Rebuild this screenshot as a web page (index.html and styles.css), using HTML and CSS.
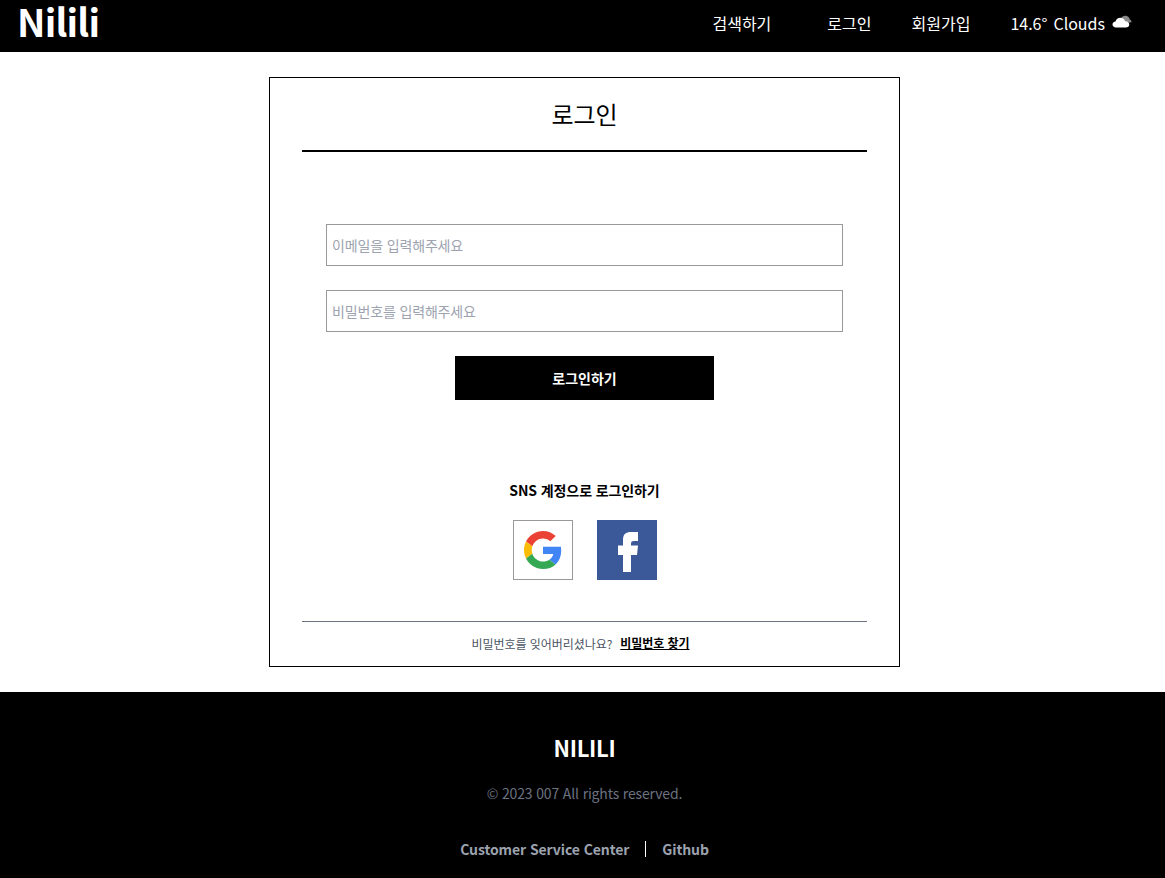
FILE: index.html
```html
<!DOCTYPE html>
<html lang="ko">
<head>
    <meta charset="UTF-8">
    <meta name="viewport" content="width=device-width, initial-scale=1.0">
    <title>Nilili 로그인</title>
    <link rel="stylesheet" href="styles.css">
</head>
<body>
    <header class="header">
        <a class="logo" href="#">Nilili</a>
        <nav class="nav">
            <a class="nav-search" href="#">검색하기</a>
            <a class="nav-login" href="#">로그인</a>
            <a class="nav-join" href="#">회원가입</a>
            <div class="weather">
                <span>14.6°</span>
                <span>Clouds</span>
                <svg class="weather-icon" width="20" height="14" viewBox="0 0 20 14">
                    <path fill="#8a8a8a" d="M9 3.5C10 1.2 12 .4 14 .8c2 .4 3.400 1.800 3.800 3.600 1.200.5 1.900 1.600 1.700 2.900L14 8z"/>
                    <path fill="#fff" d="M4 12.500C2 12.500.5 11.300.5 9.600c0-1.600 1.300-2.900 3-3C4 4.300 6 2.800 8.300 2.800c2.300 0 4.200 1.400 4.800 3.500 2.300-.2 4.200 1.300 4.200 3.200s-1.500 3-3.500 3z"/>
                </svg>
            </div>
        </nav>
    </header>

    <main class="main">
        <section class="card">
            <h1 class="card-title">로그인</h1>
            <form class="login-form">
                <input class="text-input" type="email" placeholder="이메일을 입력해주세요">
                <input class="text-input" type="password" placeholder="비밀번호를 입력해주세요">
                <button class="submit-btn" type="button">로그인하기</button>
            </form>
            <div class="sns">
                <p class="sns-title">SNS 계정으로 로그인하기</p>
                <div class="sns-list">
                    <a class="sns-btn sns-google" href="#">
                        <svg width="38" height="38" viewBox="0 0 48 48">
                            <path fill="#EA4335" d="M24 9.500c3.540 0 6.710 1.220 9.210 3.600l6.850-6.850C35.900 2.380 30.470 0 24 0 14.620 0 6.510 5.380 2.560 13.220l7.980 6.190C12.430 13.720 17.740 9.500 24 9.500z"/>
                            <path fill="#4285F4" d="M46.980 24.550c0-1.570-.15-3.090-.38-4.550H24v9.020h12.940c-.58 2.960-2.260 5.480-4.780 7.180l7.730 6c4.510-4.180 7.090-10.360 7.090-17.650z"/>
                            <path fill="#FBBC05" d="M10.530 28.590c-.48-1.450-.76-2.990-.76-4.590s.27-3.140.76-4.590l-7.980-6.190C.92 16.460 0 20.120 0 24c0 3.880.92 7.540 2.560 10.780l7.970-6.190z"/>
                            <path fill="#34A853" d="M24 48c6.480 0 11.930-2.130 15.890-5.810l-7.730-6c-2.150 1.450-4.920 2.300-8.160 2.300-6.260 0-11.570-4.220-13.470-9.910l-7.980 6.190C6.510 42.620 14.620 48 24 48z"/>
                        </svg>
                    </a>
                    <a class="sns-btn sns-facebook" href="#">
                        <svg width="60" height="60" viewBox="0 0 60 60">
                            <path fill="#fff" d="M26 52V35h-5v-9.500h5V20c0-6 3-8 8-8h7v9h-4c-2.500 0-3 1-3 3v1.500h7L40 35h-6v17z"/>
                        </svg>
                    </a>
                </div>
            </div>
            <div class="find-row">
                <span class="find-text">비밀번호를 잊어버리셨나요?</span>
                <a class="find-link" href="#">비밀번호 찾기</a>
            </div>
        </section>
    </main>

    <footer class="footer">
        <div class="footer-brand">NILILI</div>
        <p class="footer-copy">© 2023 007 All rights reserved.</p>
        <div class="footer-links">
            <a href="#">Customer Service Center</a>
            <a href="#">Github</a>
        </div>
    </footer>
</body>
</html>
```

FILE: styles.css
```css
* {
    box-sizing: border-box;
}

body {
    margin: 0;
    font-family: "Noto Sans CJK KR", "Noto Sans", sans-serif;
    background-color: white;
    color: black;
}

a {
    color: inherit;
    text-decoration: none;
}

.header {
    height: 52px;
    background-color: black;
    color: white;
    display: flex;
    justify-content: space-between;
    align-items: flex-start;
    padding: 0 33px 0 17px;
}

.logo {
    font-size: 38px;
    font-weight: 700;
    line-height: 42px;
    letter-spacing: -0.8px;
}

.nav {
    display: flex;
    align-items: center;
    font-size: 16px;
    line-height: 24px;
    margin-top: 11px;
}

.nav-search {
    margin-right: 56px;
}

.nav-login {
    margin-right: 40px;
}

.nav-join {
    margin-right: 40px;
}

.weather {
    display: flex;
    align-items: center;
    gap: 6px;
}

.weather-icon {
    margin-left: 1px;
    margin-top: -2px;
}

.main {
    padding: 25px 0 25px 4px;
    display: flex;
    justify-content: center;
}

.card {
    width: 631px;
    height: 590px;
    border: 1px solid black;
    padding: 0 32px;
}

.card-title {
    margin: 0;
    height: 74px;
    border-bottom: 2px solid black;
    text-align: center;
    font-size: 24px;
    font-weight: 400;
    line-height: 72px;
}

.login-form {
    display: flex;
    flex-direction: column;
    align-items: center;
    gap: 24px;
    padding-top: 72px;
}

.text-input {
    width: 517px;
    height: 42px;
    border: 1px solid #999;
    padding: 0 5px;
    font-family: inherit;
    font-size: 14px;
    letter-spacing: -0.15px;
    outline: none;
}

.text-input::placeholder {
    color: #9ca3af;
}

.submit-btn {
    width: 259px;
    height: 44px;
    border: none;
    background-color: black;
    color: white;
    font-family: inherit;
    font-size: 14px;
    font-weight: 700;
}

.sns {
    margin-top: 78px;
    text-align: center;
}

.sns-title {
    margin: 0;
    font-size: 14px;
    font-weight: 700;
    line-height: 24px;
    letter-spacing: -0.1px;
}

.sns-list {
    display: flex;
    justify-content: center;
    gap: 24px;
    margin-top: 18px;
}

.sns-btn {
    width: 60px;
    height: 60px;
    display: flex;
    align-items: center;
    justify-content: center;
}

.sns-google {
    border: 1px solid #999;
}

.sns-facebook {
    background-color: #3b5998;
}

.find-row {
    margin-top: 41px;
    height: 44px;
    border-top: 1px solid #6b7280;
    display: flex;
    justify-content: center;
    align-items: center;
    gap: 8px;
    padding-right: 8px;
    font-size: 12px;
    letter-spacing: -0.05px;
}

.find-text {
    color: #4b5563;
}

.find-link {
    font-weight: 700;
    text-decoration: underline;
    margin-top: -3px;
}

.footer {
    height: 186px;
    background-color: black;
    color: white;
    text-align: center;
    padding: 37px 0 0 4px;
}

.footer-brand {
    font-size: 22px;
    font-weight: 700;
    line-height: 36px;
    letter-spacing: -0.3px;
}

.footer-copy {
    margin: 18px 0 0;
    font-size: 14px;
    line-height: 20px;
    letter-spacing: -0.15px;
    color: #6b7280;
}

.footer-links {
    display: flex;
    justify-content: center;
    margin-top: 36px;
    font-size: 14px;
    font-weight: 700;
    line-height: 20px;
    letter-spacing: -0.09px;
    color: #9ca3af;
}

.footer-links a:first-child {
    padding-right: 16px;
    border-right: 1px solid white;
    margin-right: 16px;
    height: 16px;
    line-height: 16px;
    margin-top: 2px;
}
```
